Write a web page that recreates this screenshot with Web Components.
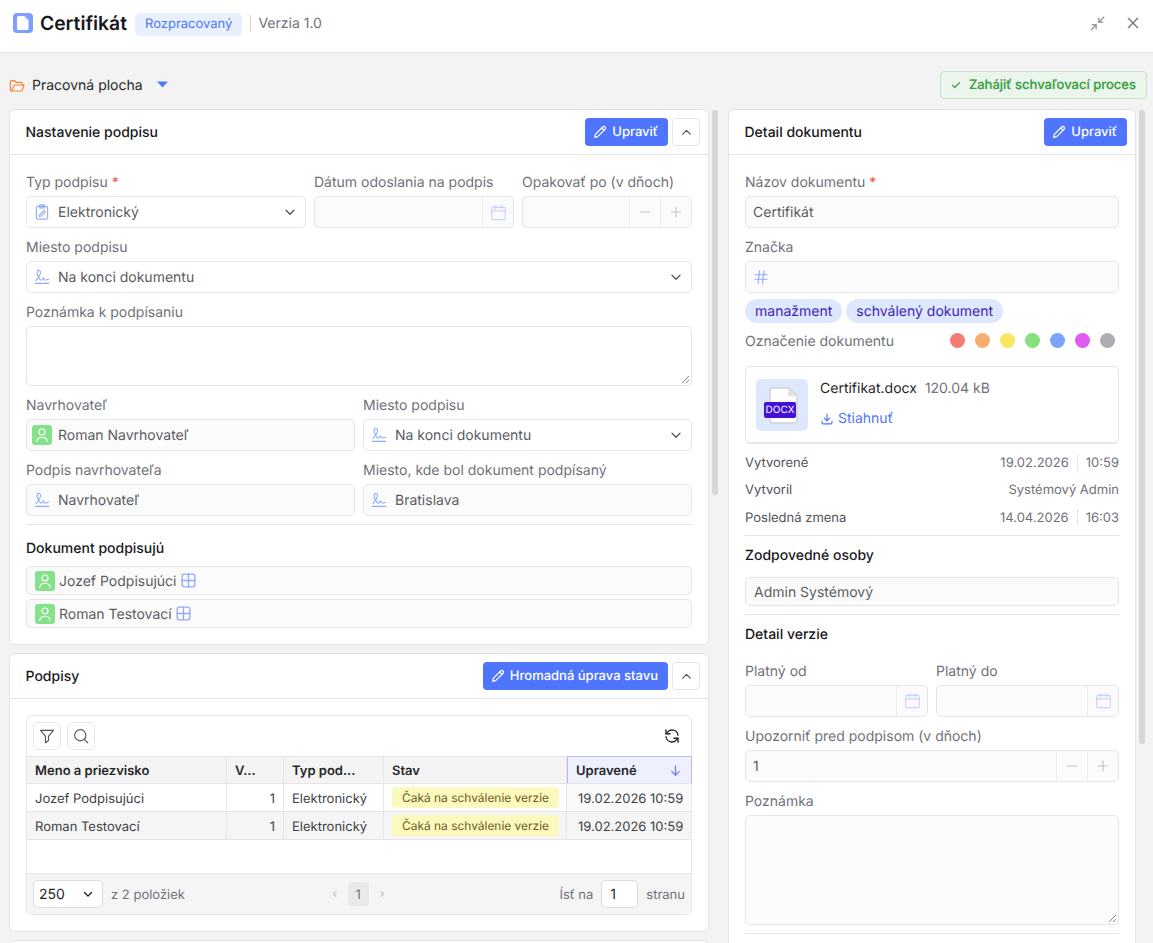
<!DOCTYPE html>
<html lang="sk"><head><meta charset="utf-8"><title>Certifikát</title>
<style>
html,body{margin:0;height:100%;overflow:hidden;background:#f3f3f3;font-family:Inter,"Noto Sans",sans-serif;font-size:14px;color:#18181b;text-rendering:geometricPrecision}
</style></head><body>
<x-shell>
  <x-topbar slot="top"></x-topbar>
  <x-actionbar slot="bar"></x-actionbar>
  <x-pane slot="left" thumb="385">
    <x-card title="Nastavenie podpisu" collapse style="margin-bottom:8px">
      <x-btn slot="actions" icon="pencil">Upraviť</x-btn>
      <x-form>
        <x-row cols="280px 200px 170px">
          <x-field label="Typ podpisu" required><x-input icon="clip" value="Elektronický" chevron enabled></x-input></x-field>
          <x-field label="Dátum odoslania na podpis"><x-input suffix="date"></x-input></x-field>
          <x-field label="Opakovať po (v dňoch)"><x-input suffix="stepper"></x-input></x-field>
        </x-row>
        <x-field label="Miesto podpisu"><x-input icon="sign" value="Na konci dokumentu" chevron enabled></x-input></x-field>
        <x-field label="Poznámka k podpísaniu"><x-input area="60" enabled></x-input></x-field>
        <x-row cols="1fr 1fr">
          <x-field label="Navrhovateľ"><x-input avatar value="Roman Navrhovateľ"></x-input></x-field>
          <x-field label="Miesto podpisu"><x-input icon="sign" value="Na konci dokumentu" chevron enabled></x-input></x-field>
        </x-row>
        <x-row cols="1fr 1fr">
          <x-field label="Podpis navrhovateľa"><x-input icon="sign" value="Navrhovateľ"></x-input></x-field>
          <x-field label="Miesto, kde bol dokument podpísaný"><x-input icon="sign" value="Bratislava"></x-input></x-field>
        </x-row>
      </x-form>
      <x-divider top="8" bottom="12"></x-divider>
      <x-title bottom="8">Dokument podpisujú</x-title>
      <x-signer style="margin-bottom:4px">Jozef Podpisujúci</x-signer>
      <x-signer>Roman Testovací</x-signer>
    </x-card>
    <x-card title="Podpisy" collapse style="margin-bottom:8px">
      <x-btn slot="actions" icon="pencil">Hromadná úprava stavu</x-btn>
      <x-table></x-table>
    </x-card>
    <x-card collapse></x-card>
  </x-pane>
  <x-pane slot="right" thumb="634">
    <x-card title="Detail dokumentu">
      <x-btn slot="actions" icon="pencil">Upraviť</x-btn>
      <x-form>
        <x-field label="Názov dokumentu" required><x-input value="Certifikát"></x-input></x-field>
        <x-field label="Značka"><x-input icon="hash"></x-input></x-field>
      </x-form>
      <x-tags style="margin-top:6px"><x-tag>manažment</x-tag><x-tag>schválený dokument</x-tag></x-tags>
      <x-swatches style="margin-top:7px">Označenie dokumentu</x-swatches>
      <x-file style="margin-top:15px" name="Certifikat.docx" size="120.04 kB"></x-file>
      <x-meta label="Vytvorené" date="19.02.2026" time="10:59" style="margin-top:4px"></x-meta>
      <x-meta label="Vytvoril" plain="Systémový Admin"></x-meta>
      <x-meta label="Posledná zmena" date="14.04.2026" time="16:03"></x-meta>
      <x-divider top="4" bottom="8"></x-divider>
      <x-title bottom="12">Zodpovedné osoby</x-title>
      <x-input value="Admin Systémový" height="29" pad="8" nudge></x-input>
      <x-divider top="8" bottom="8"></x-divider>
      <x-title bottom="16">Detail verzie</x-title>
      <x-form>
        <x-row cols="1fr 1fr">
          <x-field label="Platný od"><x-input suffix="date"></x-input></x-field>
          <x-field label="Platný do"><x-input suffix="date"></x-input></x-field>
        </x-row>
        <x-field label="Upozorniť pred podpisom (v dňoch)"><x-input value="1" suffix="stepper" nudge></x-input></x-field>
        <x-field label="Poznámka"><x-input area="110"></x-input></x-field>
      </x-form>
      <x-divider top="8" bottom="9"></x-divider>
    </x-card>
  </x-pane>
</x-shell>
<script>
const P={
pencil:'<path d="M4 20l1-4.500L16 4.500a2.100 2.100 0 0 1 3.500 3.500L8.500 19z"/><path d="M14.500 6l3.500 3.500"/>',
check:'<path d="M5 12.500l4.500 4.500L19 7.500"/>',
shrink:'<path d="M14 10l7-7"/><path d="M14 4.500V10h5.500"/><path d="M10 14l-7 7"/><path d="M4.500 14H10v5.500"/>',
x:'<path d="M5 5l14 14"/><path d="M19 5L5 19"/>',
down:'<path d="M6 9.500l6 6 6-6"/>',up:'<path d="M6 14.500l6-6 6 6"/>',left:'<path d="M14.500 6l-6 6 6 6"/>',right:'<path d="M9.500 6l6 6-6 6"/>',
folder:'<path d="M4 19.500a2 2 0 0 1-2-2V6a2 2 0 0 1 2-2h4.500l2 2.500H18a2 2 0 0 1 2 2V10.500"/><path d="M4 19.500h15l3.500-9H8L4 19.500z"/>',
clip:'<rect x="4.500" y="4.500" width="15" height="17" rx="2"/><path d="M9 2.500h6v4H9z"/><path d="M8.500 18l.6-2.500 4.500-4.500a1.300 1.300 0 0 1 1.900 1.900l-4.500 4.500z"/>',
sign:'<path d="M4 16.500C7 13 10 9 10 6c0-2-1-3-2-3S5.500 4.500 5.500 6.500c0 3 2 6.500 4 9 1 1.200 2 1 3-.5l1.500-2c.3 2 1 3 2.500 3 1 0 2.500-.8 4.500-1"/><path d="M3 20.500h18"/>',
cal:'<rect x="3.500" y="5.500" width="17" height="15.500" rx="1.500"/><path d="M3.500 10h17"/><path d="M8 3v4.500"/><path d="M16 3v4.500"/>',
minus:'<path d="M5 12h14"/>',plus:'<path d="M12 5v14"/><path d="M5 12h14"/>',
user:'<circle cx="12" cy="8" r="4"/><path d="M5 20.500c.6-3.500 3.400-5.500 7-5.500s6.400 2 7 5.500"/>',
grid:'<rect x="3" y="3" width="18" height="18" rx="3"/><path d="M12 3v18"/><path d="M3 12h18"/>',
hash:'<path d="M4 9h16"/><path d="M4 15h16"/><path d="M10 3.500L8 20.500"/><path d="M16 3.500l-2 17"/>',
dl:'<path d="M12 3.500V15"/><path d="M7.500 10.500L12 15l4.500-4.500"/><path d="M3.500 16v2.500a2 2 0 0 0 2 2h13a2 2 0 0 0 2-2V16"/>',
filter:'<path d="M3.500 4.500h17l-6.500 8v5.500l-4 3v-8.500z"/>',
search:'<circle cx="11" cy="11" r="7.500"/><path d="M21 21l-4.500-4.500"/>',
refresh:'<path d="M20 11a8 8 0 0 0-14.500-3.500L4 9"/><path d="M4 3.500V9h5.500"/><path d="M4 13a8 8 0 0 0 14.500 3.500L20 15"/><path d="M20 20.500V15h-5.500"/>',
arrow:'<path d="M12 4.500v15"/><path d="M6 13.500l6 6 6-6"/>'
};
const ic=(n,s=16,c='currentColor',w=1.5)=>`<svg width="${s}" height="${s}" viewBox="0 0 24 24" fill="none" stroke="${c}" stroke-width="${w*24/s}" stroke-linecap="round" stroke-linejoin="round" style="display:block;flex:none">${P[n]}</svg>`;
function def(tag,render){customElements.define(tag,class extends HTMLElement{connectedCallback(){if(this.shadowRoot)return;const r=this.attachShadow({mode:'open'});r.innerHTML=render(this)}})}
const A=(e,n,d='')=>e.hasAttribute(n)?e.getAttribute(n):d;
const LBL='#71717a',VAL='#5b5b63',BR='#e6e6e9',ICO='#93a9fb',ICOD='#c5d2fd';

def('x-shell',()=>`<style>:host{display:flex;flex-direction:column;height:943px;overflow:hidden}
.cols{flex:1;min-height:0;display:flex;padding-left:9px;overflow:hidden}</style>
<slot name="top"></slot><slot name="bar"></slot><div class="cols"><slot name="left"></slot><slot name="right"></slot></div>`);

def('x-topbar',()=>`<style>:host{display:flex;align-items:center;height:52px;background:#fff;border-bottom:1px solid #e4e4e7;padding:0 13px;position:relative}
.logo{width:20px;height:20px;border-radius:4px;background:#7f9fff;display:flex;align-items:center;justify-content:center;margin-right:7px;margin-top:-6px}
h1{font:600 19.300px/24px Inter,sans-serif;margin:-6px 8px 0 0;color:#18181b}
.badge{background:#e8effd;color:#4f75ff;font-size:13px;line-height:23px;height:23px;padding:0 10px;border-radius:5px;margin-top:-3px}
.sep{width:1px;height:16px;background:#d4d4d8;margin:-6px 8px 0 8px}
.ver{color:#71717a;font-size:14px;margin-top:-6px;margin-left:-1px}
.sp{flex:1}.b{display:flex;margin-top:-6px}</style>
<div class="logo"><svg width="14" height="16" viewBox="0 0 14 16"><path d="M2.500 1H8.500L12.500 5V13.500A1.500 1.500 0 0 1 11 15H2.500A1.500 1.500 0 0 1 1 13.500V2.500A1.500 1.500 0 0 1 2.500 1z" fill="#fff"/><path d="M8.500 1V5H12.500" fill="#dbe4ff"/></svg></div>
<h1>Certifikát</h1><span class="badge">Rozpracovaný</span><span class="sep"></span><span class="ver">Verzia 1.0</span><span class="sp"></span>
<span class="b" style="margin-right:19px">${ic('shrink',17,'#85858d',1.2)}</span><span class="b" style="margin-right:-1px">${ic('x',16,'#75757d',1.3)}</span>`);

def('x-actionbar',()=>`<style>:host{display:flex;align-items:center;height:28px;padding:18px 6px 10px 9px}
.t{margin-left:7px;color:#27272a;padding-top:1px}.car{margin-left:14px;display:block;margin-top:-1px}.sp{flex:1}.f{margin-top:1px}
.go{display:flex;align-items:center;height:26px;border:1px solid #c6e3c8;background:#ebf5ec;border-radius:4px;color:#38a042;font-weight:500;font-size:13px;padding:0 10px 0 9px;gap:7px;-webkit-text-stroke:.2px #38a042}</style>
<span class="f">${ic('folder',16,'#f5843c',1.2)}</span><span class="t">Pracovná plocha</span>
<svg class="car" width="11" height="7" viewBox="0 0 11 7"><path d="M0 .5h11L5.500 6.500z" fill="#5478f5"/></svg><span class="sp"></span>
<div class="go">${ic('check',12,'#3fa648',1.2)}<span>Zahájiť schvaľovací proces</span></div>`);

def('x-pane',e=>`<style>:host{display:block;position:relative;flex:none;height:100%;overflow:hidden;width:${e.slot==='left'?719:417}px}
.w{width:${e.slot==='left'?700:408}px}
.th{position:absolute;top:1px;left:${e.slot==='left'?703:411}px;width:6px;height:${A(e,'thumb')}px;border-radius:3px;background:#d6d6d6}</style>
<div class="w"><slot></slot></div><div class="th"></div>`);

def('x-card',e=>`<style>:host{display:block;background:#fff;border:1px solid #e4e4e7;border-radius:6px;box-sizing:border-box}
.h{height:44px;display:flex;align-items:center;padding:0 8px 0 15.500px;border-bottom:1px solid #e4e4e7;gap:4px}
.t{flex:1;color:#18181b;font-weight:500;font-size:14px}
.c{width:28px;height:28px;box-sizing:border-box;border:1px solid #e4e4e7;border-radius:5px;display:flex;align-items:center;justify-content:center;background:#fff}
.b{padding:16px}</style>
<div class="h"><span class="t">${A(e,'title')}</span><slot name="actions"></slot>${e.hasAttribute('collapse')?`<span class="c">${ic('up',15,'#52525b',1.2)}</span>`:''}</div>
<div class="b"><slot></slot></div>`);

def('x-btn',e=>`<style>:host{display:inline-flex;align-items:center;height:28px;background:#4f75ff;color:#fff;border-radius:4px;padding:0 10px 0 7px;gap:4px;font-weight:500;font-size:13px}</style>${ic(A(e,'icon'),16,'#fff',1.2)}<slot></slot>`);

def('x-form',()=>`<style>:host{display:grid;gap:8px}</style><slot></slot>`);
def('x-row',e=>`<style>:host{display:grid;gap:8px;grid-template-columns:${A(e,'cols')}}</style><slot></slot>`);
def('x-field',e=>`<style>:host{display:block;min-width:0}.l{font-size:14px;line-height:21px;color:${LBL};padding-top:1px;margin-bottom:3px;white-space:nowrap;display:block}.r{color:#ef5a3c}</style>
<span class="l">${A(e,'label')}${e.hasAttribute('required')?' <span class="r">*</span>':''}</span><slot></slot>`);

def('x-input',e=>{
 const en=e.hasAttribute('enabled'),area=A(e,'area'),h=A(e,'height','32'),pad=A(e,'pad','7'),suf=A(e,'suffix');
 if(area)return `<style>:host{display:block;height:${area}px;box-sizing:border-box;border:1px solid ${BR};border-radius:5px;background:${en?'#fff':'#fcfcfc'};position:relative}
 svg{position:absolute;right:1px;bottom:1px}</style><svg width="9" height="9" viewBox="0 0 9 9" stroke="#8a8a8a" fill="none"><path d="M1 8l7-7M5 8l3-3"/></svg>`;
 let lead='';
 if(e.hasAttribute('avatar'))lead=`<span class="av" style="margin-left:-2px">${ic('user',18,'#fff',1.2)}</span>`;
 else if(A(e,'icon'))lead=`<span class="ld">${ic(A(e,'icon'),18,ICO,1.1)}</span>`;
 let end='';
 if(e.hasAttribute('chevron'))end=`<span class="ch">${ic('down',16,'#52525b',1.3)}</span>`;
 if(suf==='date')end=`<span class="s" style="width:31px">${ic('cal',19,ICOD,1.1)}</span>`;
 if(suf==='stepper')end=`<span class="s" style="width:31px">${ic('minus',16,'#c4c4c8',1.2)}</span><span class="s" style="width:31px">${ic('plus',16,'#c4c4c8',1.2)}</span>`;
 return `<style>:host{display:flex;align-items:center;height:${h}px;box-sizing:border-box;border:1px solid ${BR};border-radius:5px;background:${en?'#fff':'#fbfbfb'};color:${VAL};padding-left:${pad}px;font-size:14px;overflow:hidden}
 .ld{width:25px;flex:none;display:flex;margin-left:-1px}
 .av{width:20px;height:20px;border-radius:3px;background:#86e28a;display:flex;align-items:center;justify-content:center;margin-right:6px;flex:none}
 .t{flex:1;white-space:nowrap;min-width:0;${e.hasAttribute('nudge')?'padding-top:2px;':''}}.ch{margin-right:7px;display:flex}
 .s{height:100%;border-left:1px solid #efeff1;display:flex;align-items:center;justify-content:center;box-sizing:border-box;flex:none}</style>${lead}<span class="t">${A(e,'value')}</span>${end}`;
});

def('x-divider',e=>`<style>:host{display:block;height:1px;background:#e4e4e7;margin:${A(e,'top','8')}px 0 ${A(e,'bottom','8')}px}</style>`);
def('x-title',e=>`<style>:host{display:block;font-weight:500;font-size:14px;line-height:21px;color:#18181b;padding-top:1px;margin-bottom:${A(e,'bottom','8')-1}px}</style><slot></slot>`);

def('x-signer',()=>`<style>:host{display:flex;align-items:center;height:29px;box-sizing:border-box;border:1px solid ${BR};border-radius:5px;background:#fbfbfb;color:${VAL};padding-left:8px}
.av{width:20px;height:20px;border-radius:3px;background:#86e28a;display:flex;align-items:center;justify-content:center;margin-right:4px}.g{margin-left:3px}.n{padding-top:1px}</style>
<span class="av">${ic('user',18,'#fff',1.2)}</span><span class="n"><slot></slot></span><span class="g">${ic('grid',17,ICO,1.3)}</span>`);

def('x-tags',()=>`<style>:host{display:flex;gap:4px}</style><slot></slot>`);
def('x-tag',()=>`<style>:host{display:block;height:23px;padding-top:1px;line-height:24px;background:#dde7fd;color:#3b1fb8;border-radius:12px;padding-left:10px;padding-right:10px;font-size:14px}</style><slot></slot>`);

def('x-swatches',()=>`<style>:host{display:flex;align-items:center;height:21px;color:${LBL}}.s{flex:1}.d{width:15px;height:15px;border-radius:50%;margin-left:10px}.e{width:4px}.l{padding-top:2px}</style>
<span class="l"><slot></slot></span><span class="s"></span>${['#f47c72','#f6b06d','#fae65f','#85e07e','#7ba4fb','#df5cf0','#adadb3'].map(c=>`<span class="d" style="background:${c}"></span>`).join('')}<span class="e"></span>`);

def('x-file',e=>`<style>:host{display:flex;height:78px;box-sizing:border-box;border:1px solid ${BR};border-bottom-width:2px;border-radius:5px;padding:12px 10px;background:#fff}
.th{width:52px;height:52px;background:#dde7fd;border-radius:5px;position:relative;flex:none;margin-right:12px}
.lb{position:absolute;left:8px;top:23px;width:32px;height:16px;background:#4410d8;border-radius:2px;color:#fff;font-size:10px;line-height:16px;text-align:center}
.pg{position:absolute;left:13px;top:8px}
.tx{padding-top:1px}.n{color:#27272a;line-height:18px}.sz{color:#71717a;margin-left:8px}
.dl{display:flex;align-items:center;gap:4px;color:#4f75ff;margin-top:12px;line-height:18px}</style>
<div class="th"><svg class="pg" width="29" height="37" viewBox="0 0 29 37"><path d="M3 1H20L28 9V33A3 3 0 0 1 25 36H4A3 3 0 0 1 1 33V3A2 2 0 0 1 3 1z" fill="#fff" stroke="#d4d4d8" stroke-width="1.500"/><path d="M19 1V9.500H28z" fill="#e4e4e7"/></svg><span class="lb">DOCX</span></div>
<div class="tx"><div class="n">${A(e,'name')}<span class="sz">${A(e,'size')}</span></div><div class="dl">${ic('dl',14,'#4f75ff',1.2)}<span>Stiahnuť</span></div></div>`);

def('x-meta',e=>`<style>:host{display:flex;align-items:center;height:27.500px;font-size:13px;color:#52525b}.s{flex:1}.v{color:#71717a}.x{padding-top:2px}.b{width:1px;height:16px;background:#e4e4e7;margin:0 8px}</style>
<span class="x">${A(e,'label')}</span><span class="s"></span>${A(e,'plain')?`<span class="v x">${A(e,'plain')}</span>`:`<span class="v x">${A(e,'date')}</span><span class="b"></span><span class="v x">${A(e,'time')}</span>`}`);

def('x-table',()=>{
 const row=(n,cls)=>`<div class="r ${cls}"><span class="c">${n}</span><span class="c n">1</span><span class="c">Elektronický</span><span class="c"><span class="bd">Čaká na schválenie verzie</span></span><span class="c z">19.02.2026 10:59</span></div>`;
 return `<style>:host{height:200px;box-sizing:border-box;border:1px solid ${BR};border-radius:6px;font-size:13px;color:#3f3f46;display:flex;flex-direction:column}
 .tb{height:40px;display:flex;align-items:center;padding:0 6px;gap:6px;flex:none}
 .ib{width:28px;height:28px;box-sizing:border-box;border:1px solid ${BR};border-radius:5px;display:flex;align-items:center;justify-content:center}
 .sp{flex:1}.rf{margin-right:4px;display:flex}
 .r{display:grid;grid-template-columns:200px 57px 100px 183px 1fr;height:28px;border-top:1px solid ${BR};box-sizing:border-box;flex:none}
 .r.last{border-bottom:1px solid ${BR};height:29px}
 .alt{background:#f5f5f5}
 .c{display:flex;align-items:center;padding:2px 8px 0;border-right:1px solid ${BR};white-space:nowrap;overflow:hidden;box-sizing:border-box}
 .c:last-child{border-right:0}
 .n{justify-content:flex-end}.z{padding:2px 0 0 11px;background:#f9f9f9}.alt .z{background:#f5f5f5}
 .hd{background:#f4f4f5;font-weight:600;color:#27272a;height:27px}
 .hd .c{padding-top:0}
 .hd .srt{background:#eef0fd;box-shadow:inset 0 0 0 1px #b4bdf7;justify-content:space-between;padding:1px 9px 0;margin:-1px -1px 0 0;height:28px}
 .bd{background:#fbf9bd;color:#6e5a1d;border-radius:4px;height:21px;line-height:21px;padding:0 10px;font-size:11.950px;display:block;margin-top:-2px}
 .e{flex:1}
 .ft{height:41px;flex:none;background:#f5f5f5;border-top:1px solid ${BR};border-radius:0 0 5px 5px;display:flex;align-items:center;padding:0 6px;color:#71717a;box-sizing:border-box}
 .sel{width:70px;height:28px;box-sizing:border-box;border:1px solid #dcdce0;border-radius:5px;background:#fff;display:flex;align-items:center;justify-content:space-between;padding:0 7px 0 5px;color:#27272a;font-size:14px}
 .pg{flex:1;display:flex;align-items:center;justify-content:center;gap:8px;color:#9c9ca3;padding-right:27px}
 .cur{width:21px;height:24px;padding-top:1px;box-sizing:border-box;background:#e9e9eb;border-radius:4px;display:flex;align-items:center;justify-content:center;color:#71717a}
 .go{width:37px;height:28px;box-sizing:border-box;border:1px solid #dcdce0;border-radius:5px;background:#fff;margin:0 9px 0 8px;color:#27272a;font-size:14px;display:flex;align-items:center;padding-left:8px}
 .x{padding-top:2px}
 </style>
 <div class="tb"><span class="ib">${ic('filter',18,'#52525b',1.1)}</span><span class="ib">${ic('search',18,'#52525b',1.1)}</span><span class="sp"></span><span class="rf">${ic('refresh',18,'#27272a',1.3)}</span></div>
 <div class="r hd"><span class="c">Meno a priezvisko</span><span class="c">V...</span><span class="c">Typ pod...</span><span class="c">Stav</span><span class="c srt">Upravené${ic('arrow',15,'#6a78f0',1.2)}</span></div>
 ${row('Jozef Podpisujúci','')}
 ${row('Roman Testovací','alt last')}
 <div class="e"></div>
 <div class="ft"><span class="sel">250${ic('down',14,'#27272a',1.4)}</span><span class="x" style="margin-left:8px">z 2 položiek</span>
 <span class="pg">${ic('left',10,'#a1a1aa',1)}<span class="cur">1</span>${ic('right',10,'#a1a1aa',1)}</span>
 <span class="x" style="margin-right:-1px;margin-left:1px">Ísť na</span><span class="go" style="margin-left:9px;margin-right:8px">1</span><span class="x">stranu</span></div>`;
});
</script>
</body></html>
